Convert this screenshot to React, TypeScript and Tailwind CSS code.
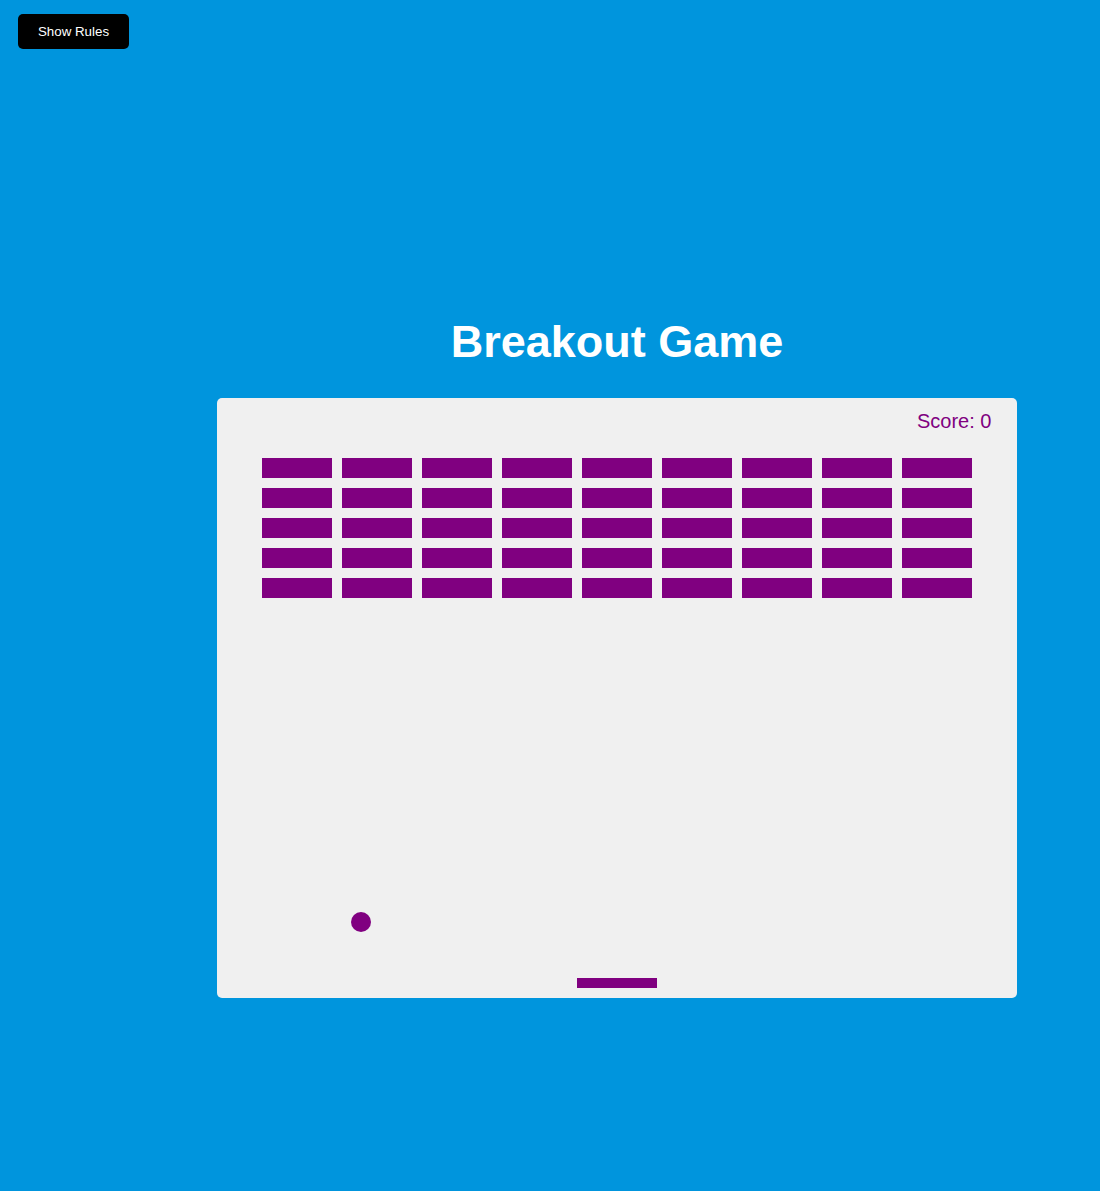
import React from 'react';

const ROWS = 5;
const COLS = 9;

const bricks = Array.from({ length: ROWS * COLS }, (_, i) => i);

export default function App() {
  return (
    <div className="relative min-h-screen w-full bg-[#0095dd] font-['Liberation_Sans',Arial,sans-serif] flex flex-col items-center pt-[316px] pl-[134px] pb-[193px]">
      {/* Rules toggle */}
      <button className="absolute top-[14px] left-[18px] w-[111px] h-[35px] bg-black text-white text-[13.33px] rounded-[5px] cursor-pointer">
        Show Rules
      </button>

      <h1 className="text-white font-bold text-[45px] leading-[52px] mb-[30px]">
        Breakout Game
      </h1>

      {/* Game board */}
      <div className="relative w-[800px] h-[600px] bg-[#f0f0f0] rounded-[5px]">
        <div className="absolute top-[12px] left-[700px] text-[20px] leading-[23px] text-[#800080] whitespace-nowrap">
          Score: 0
        </div>

        <div className="pt-[60px] pl-[45px] grid grid-cols-[repeat(9,70px)] auto-rows-[20px] gap-[10px]">
          {bricks.map((b) => (
            <div key={b} className="bg-[#800080]" />
          ))}
        </div>

        {/* ball */}
        <div className="absolute left-[134px] top-[514px] w-[20px] h-[20px] rounded-full bg-[#800080]" />
        {/* paddle */}
        <div className="absolute left-[360px] top-[580px] w-[80px] h-[10px] bg-[#800080]" />
      </div>
    </div>
  );
}
